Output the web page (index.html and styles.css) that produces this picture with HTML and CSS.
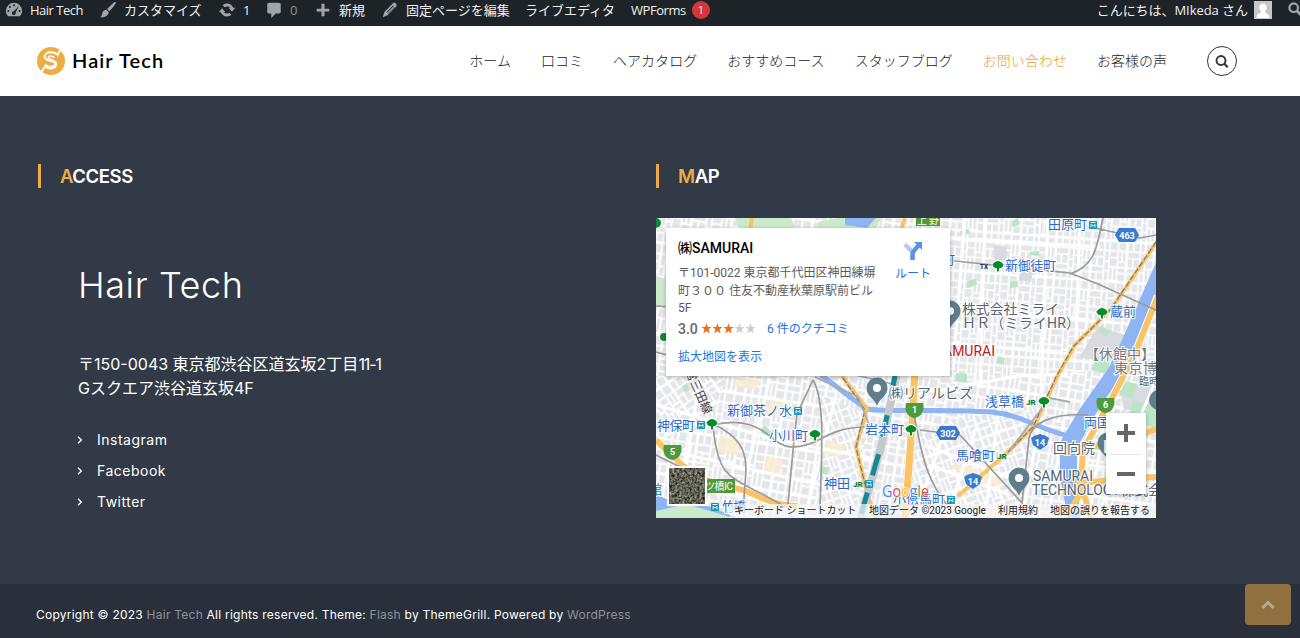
FILE: index.html
```html
<!DOCTYPE html>
<html lang="ja">
<head>
<meta charset="utf-8">
<title>Hair Tech</title>
<link rel="stylesheet" href="styles.css">
</head>
<body>
<div class="adminbar">
  <div class="ab-item ab-site"><svg class="ab-icon" width="18" height="18" viewBox="0 0 20 20"><path fill-rule="evenodd" d="M3.8 17h12.4c1.8-1.6 2.8-3.8 2.8-6a9 9 0 1 0-18 0c0 2.300 1 4.400 2.800 6zM10 3.500a1.100 1.100 0 1 1 0 2.200 1.100 1.100 0 0 1 0-2.200zM5.500 5.500a1.100 1.100 0 1 1 0 2.200 1.100 1.100 0 0 1 0-2.200zM3.700 9.900a1.100 1.100 0 1 1 0 2.200 1.100 1.100 0 0 1 0-2.200zM16.300 9.900a1.100 1.100 0 1 1 0 2.200 1.100 1.100 0 0 1 0-2.200zM15.500 5.500 11.800 12.800a2.100 2.100 0 1 1-2-1.400z"/></svg><span>Hair Tech</span></div>
  <div class="ab-item ab-custom"><svg class="ab-icon" width="18" height="18" viewBox="0 0 20 20"><path d="M18.300 1.200c1 .9-.2 3-6.700 10.200l-2.700-2.400C15.300 2.300 17.300.3 18.300 1.200zM8 9.800l2.800 2.500c-.2 3.600-4.200 7-9.600 5.500 2.500-.8 1.800-3.500 3-5.500C5 10.700 6.500 9.900 8 9.800z"/></svg><span>カスタマイズ</span></div>
  <div class="ab-item ab-update"><svg class="ab-icon" width="18" height="18" viewBox="0 0 20 20"><path d="M10.200 2.800c3 0 5.600 1.900 6.600 4.700h2.400l-3.700 4.500L11.800 7.500h1.800c-.8-.9-2-1.500-3.400-1.500-1.100 0-2.100.4-2.900 1L5.200 4.700c1.300-1.200 3.100-1.900 5-1.900zM9.800 17.200c-3 0-5.600-1.900-6.600-4.700H.8L4.500 8l3.700 4.500H6.400c.8.900 2 1.500 3.400 1.500 1.100 0 2.100-.4 2.900-1l2.100 2.300c-1.300 1.200-3.100 1.900-5 1.900z"/></svg><span>1</span></div>
  <div class="ab-item ab-comment"><svg class="ab-icon" width="18" height="18" viewBox="0 0 20 20"><path d="M4.500 2h11c1 0 2 .9 2 2v8c0 1-1 2-2 2H12l-5 5v-5H4.500c-1 0-2-1-2-2V4c0-1 1-2 2-2z"/></svg><span class="ab-dim">0</span></div>
  <div class="ab-item ab-new"><svg class="ab-icon" width="18" height="18" viewBox="0 0 20 20"><path d="M8.300 3h3.400v5.500H17v3.300h-5.300V17H8.300v-5.200H3V8.500h5.300z"/></svg><span>新規</span></div>
  <div class="ab-item ab-edit"><svg class="ab-icon" width="18" height="18" viewBox="0 0 20 20"><path fill-rule="evenodd" d="M13.200 2.400c1.100-1.100 2.400-.6 3.300.3s1.400 2.200.4 3.300L7.300 15.700 2 18l1.700-5.700zM13.400 5.100l-7.300 7.400.6.500L14 5.700zM14.900 6.600l-7.400 7.200.4.400 7.400-7.200z"/></svg><span>固定ページを編集</span></div>
  <div class="ab-item ab-live"><span>ライブエディタ</span></div>
  <div class="ab-item ab-forms"><span>WPForms</span><b class="ab-badge">1</b></div>
  <div class="ab-right">
    <span class="ab-hello">こんにちは、MIkeda さん</span>
    <svg class="avatar" width="18" height="18" viewBox="0 0 18 18"><path fill="#c5c7c9" d="M0 0h18v18H0z"/><path fill="#fff" d="M9 2.500a3.700 3.700 0 0 1 3.700 4c0 2-.7 3-1.500 3.700v1.500c2.500.7 4 1.800 4.300 5.300h-13c.3-3.500 1.800-4.600 4.300-5.300v-1.500C6 9.500 5.300 8.500 5.300 6.500A3.700 3.700 0 0 1 9 2.500z"/></svg>
    <svg class="ab-search" width="18" height="18" viewBox="0 0 18 18"><circle cx="6.700" cy="6.700" r="4.300" fill="none" stroke="#a0a5aa" stroke-width="2.200"/><path d="m10 10 6 6" stroke="#a0a5aa" stroke-width="3"/></svg>
  </div>
</div>
<header class="header">
  <a class="brand">
    <svg width="28" height="28" viewBox="0 0 28 28"><circle cx="14" cy="14" r="14" fill="#eead42"/><path d="M23 3.500 20.500 8c-1.500-2-4-2.700-6.800-2.700-3.500 0-6 1.600-6 4.300 0 6 10.600 3.300 10.600 7.300 0 3.400-6.700 3.700-9.500 1.300L4.500 25" fill="none" stroke="#fff" stroke-width="1.900"/><path d="M17.300 10.700c-2.500-2.300-6-2-6 .1 0 2.500 8 1.600 8 6.400 0 4.700-7.800 5.800-11.700 2.500" fill="none" stroke="#fff" stroke-width="1.700"/></svg>
    <span>Hair Tech</span>
  </a>
  <nav class="nav"><a>ホーム</a><a>口コミ</a><a>ヘアカタログ</a><a>おすすめコース</a><a>スタッフブログ</a><a class="active">お問い合わせ</a><a>お客様の声</a></nav>
  <div class="search"><svg width="14" height="14" viewBox="0 0 14 14" fill="none" stroke="#333"><circle cx="6" cy="6.500" r="4.500" stroke-width="1.900"/><path d="m9.300 9.800 3.400 3.400" stroke-width="2.300"/></svg></div>
</header>
<main class="main">
  <section class="col">
    <h3 class="heading"><span><i>A</i>CCESS</span></h3>
    <div class="access">
      <h1>Hair Tech</h1>
      <p class="address">〒<span class="zip">150-0043</span> 東京都渋谷区道玄坂2丁目<span class="tight">11-1</span><br>Gスクエア渋谷道玄坂4F</p>
      <ul class="links">
        <li><svg width="6" height="8" viewBox="0 0 6 8"><path d="m1 .8 3.300 3.200L1 7.200"/></svg><a>Instagram</a></li>
        <li><svg width="6" height="8" viewBox="0 0 6 8"><path d="m1 .8 3.300 3.200L1 7.200"/></svg><a>Facebook</a></li>
        <li><svg width="6" height="8" viewBox="0 0 6 8"><path d="m1 .8 3.300 3.200L1 7.200"/></svg><a>Twitter</a></li>
      </ul>
    </div>
  </section>
  <section class="col">
    <h3 class="heading"><span><i>M</i>AP</span></h3>
    <div class="map">
      <svg class="map-art" width="500" height="300" viewBox="656 218 500 300">
        <defs>
          <pattern id="blocksA" width="42" height="48" patternUnits="userSpaceOnUse" patternTransform="rotate(4) scale(.85)">
            <path fill="#fff" d="M0 0h42v48H0z"/><path fill="#e4e6ea" d="M1 1h5v9H1zM8 1h6v9H8zM16 1h4v9h-4zM22 1h8v9h-8zM32 1h8v9h-8zM1 12h13v6H1zM16 12h4v11h-4zM22 12h8v6h-8zM32 12h3v11h-3zM37 12h3v11h-3zM1 20h5v9H1zM8 20h6v9H8zM22 20h8v9h-8zM16 25h4v9h-4zM32 25h8v4h-8zM1 31h13v5H1zM22 31h3v14h-3zM27 31h3v14h-3zM32 31h8v5h-8zM1 38h5v8H1zM8 38h6v8H8zM16 36h4v10h-4zM32 38h8v8h-8z"/>
          </pattern>
          <pattern id="blocksB" href="#blocksA" patternTransform="rotate(-19) scale(.85)"/>
          <pattern id="blocksC" href="#blocksA" patternTransform="rotate(-34) scale(.9)"/>
          <pattern id="blocksD" href="#blocksA" patternTransform="rotate(9) scale(.95)"/>
          <filter id="ground" x="0" y="0" width="1" height="1" color-interpolation-filters="sRGB"><feTurbulence type="fractalNoise" baseFrequency=".4" numOctaves="3" seed="4"/><feColorMatrix values=".9 .3 0 0 -.22 .9 .3 0 0 -.22 .8 .3 0 0 -.22 0 0 0 0 1"/></filter>
          <path id="pin" d="M0 14C-2 7-10.500 4-10.500-4a10.500 10.500 0 0 1 21 0C10.500 4 2 7 0 14z"/>
          <path id="leaf" d="M-1 5.500v-3C-4 2-5.500 0-5.500-1.500-4-3.800-2-5 0-5s4 1.200 5.500 3.500C5.500 0 4 2 1 2.500v3z"/>
          <g id="metro"><rect x="-4" y="-4" width="8" height="8" rx="1" fill="#1595b5"/><path d="M-2 2.500V-.5l2 1.500 2-1.500v3M-2.500-2.500h5" fill="none" stroke="#fff" stroke-width=".9"/></g>
        </defs>
        <path fill="url(#blocksD)" d="M656 218h500v300H656z"/>
        <path fill="url(#blocksA)" d="M940 218h216v147l-216 20z"/>
        <path fill="url(#blocksB)" d="M918 430l130-30-38 118H905z"/>
        <path fill="url(#blocksC)" d="M656 376h70l-15 45-55 20z"/>
        <path fill="url(#blocksB)" d="M822 395l45 20-10 103h-40z"/>
        <g fill="#f8ecd2"><path d="m720 435 20 5-3 16-20-5zM770 400l20 3-4 15-20-4zM766 456l17 3-4 18-16-3zM828 440l18 6-5 12-18-5zM955 462l50 18-7 6-48-18zM735 377l25 4-4 9-22-4z" opacity=".85"/></g>
        <g fill="#d9dbe0"><path d="m994 245 13 2-1 14-12-1zM1020 270l13 2-2 10-12-2zM1098 326l36 12-15 24-40-4zM1120 390l36-10v30h-32z"/></g>
        <g fill="#bce5c5"><path d="m682 386 5-3 3 7-5 3zM760 430l5-5 7 8-5 4zM960 231l9-2 1 5-9 1zM1012 221l6-3 1 7-7 2zM967 281l9-2 1 6-10 3zM1030 252l9-1v5l-9-1zM1010 282l8-1v6l-8 1zM956 373l11 1v9l-11-2zM998 356l6 2v7l-7-2zM1102 325l8 8-4 4-8-7zM1120 380l17 4-4 14-16-4zM1133 400l23 8v20l-27-8zM1095 358l15 4-3 12-15-4zM822 466l7 2-2 7-6-2z"/></g>
        <path fill="#cceacb" d="m735 218 56 0 5 11h-57zM818 222l20-4h43l-5 11h-58zM656 276l12 4v30l-12-5z"/>
        <path fill="#8eb4f4" d="m845 218 31 0-9 10-22-3z"/>
        <g fill="none" stroke="#fff" stroke-width="3"><path d="M965 218l-12 152M985 218l-5 170M1048 218l-7 175M1080 218l-4 122M940 237l160 10M940 304l150 16M940 342l130 12M656 405l120 35 100 19M656 448l210 47M700 376l-22 142M770 378l-35 140M840 378l-35 140M925 445l90 35M930 465l80 30M945 430l-30 88M977 425l-30 93M1000 400l-15 118M1045 395l-23 123M918 394l100-18 50-2M1156 380l-60 138M1100 430l56 12M1086 465l70 8"/></g>
        <path d="m1158 258-36 82-14 29-29 41-19 32v36l8 40h12l-3-40v-30l21-38 33-48 26-66z" fill="#8eb4f4"/>
        <path d="m820 374 30 23 17 12c30 4 70-1 125 3 35 4 50 20 82 25" fill="none" stroke="#8eb4f4" stroke-width="5"/>
        <path d="m656 495 22 8 30 3 30 12h-82z" fill="#8eb4f4"/><path d="m656 511 30-7 48 14h-78z" fill="#cceacb"/>
        <g fill="none" stroke="#fff" stroke-width="8"><path d="m656 440 26 25c18 16 37 19 57 24 20 5 25 15 58 17"/><path d="m1158 296-24 60-22 42-29 52-2 34 10 34"/><path d="m915 370-3 54-7 96"/></g>
        <g fill="none" stroke="#fac465" stroke-width="6"><path d="m656 440 26 25c18 16 37 19 57 24 20 5 25 15 58 17"/><path d="m1158 296-24 60-22 42-29 52-2 34 10 34M1076 483l80-6M1076 448l40-3 40-16M1086 483l-20 35"/><path d="m915 370-3 54-7 96" stroke-width="7"/><path d="m842 376 25 33-11 38 12 50 8 21M1158 240l-46 68-37 37-17 30-23 50-25 25-52 46M752 218l-2 12M905 218l-4 12" stroke-width="4"/></g>
        <g fill="none" stroke="#777" stroke-width="1.200" stroke-dasharray="6 2"><path d="m1156 242-46 68-37 37-17 30-23 50-25 25M843 378l22 32-9 37 12 50"/></g>
        <g fill="none" stroke="#9b9b9b" stroke-width="1.700"><path d="m940 259 15 2 115 12 28 11 60 27M1103 218c-6 26-6 47-33 56M1095 228l45 10 16-3M713 425c50-12 58 21 77 22 29 1 35-20 76-20M813 380l-16 34-3 26-6 64M813 380c12 20 9 70 7 126M713 425c5 60 20 50 72 82M715 425c42 20 29 47 29 76M913 412c8 30 8 60 34 93M920 430l40 5 62 68 7-65c3-15 22-25 59-23M656 455l30 15M656 306l30 2M656 352l30 8"/><path d="m815 377 43 20 14 35M851 374l42 10" stroke="#aaa"/></g>
        <g fill="none"><path d="m897 374-16 73-21 74" stroke="#c6c9cc" stroke-width="8"/><path d="m895 376-14 70-21 72" stroke="#148899" stroke-width="5" stroke-dasharray="22 18"/><path d="m1010 450 40-52 20 4" stroke="#aaa" stroke-width="2"/></g>
        <g fill="#607d8b"><use href="#pin" x="877" y="392"/><use href="#pin" x="950" y="315"/><use href="#pin" x="1019" y="482"/><use href="#pin" x="1108" y="447"/><circle cx="1159" cy="400" r="10"/></g>
        <g fill="#fff"><circle cx="877" cy="388" r="4"/><circle cx="950" cy="311" r="4"/><circle cx="1019" cy="478" r="4"/></g>
        <g fill="#078c2d" stroke="#fff" stroke-width="2" paint-order="stroke"><use href="#leaf" x="998" y="266"/><use href="#leaf" x="1102" y="313"/><use href="#leaf" x="1044" y="402"/><use href="#leaf" x="911" y="430"/><use href="#leaf" x="815" y="435"/><use href="#leaf" x="712" y="424"/><circle cx="656" cy="223" r="5"/><circle cx="664" cy="337" r="4"/></g>
        <use href="#metro" x="1093" y="225"/><use href="#metro" x="798" y="411"/><use href="#metro" x="701" y="425"/><use href="#metro" x="869" y="484"/><use href="#metro" x="951" y="500"/><use href="#metro" x="715" y="507"/>
        <g class="shield"><path fill="#3a7bd0" d="M1119 228h16l4 7-4 7h-16l-4-7zM940 426h16l4 7-4 7h-16l-4-7zM1034 436l6-2 6 2 3 2-2 7-7 5-7-5-2-7zM967 475l6-2 6 2 3 2-2 7-7 5-7-5-2-7z"/><path fill="#4f9a3c" d="M906 403h17c2 8-2 14-8.500 15-7-1-10.500-7-8.500-15zM1097 398h17c2 8-2 14-8.500 15-7-1-10.500-7-8.500-15zM664 445h17c2 8-2 14-8.500 15-7-1-10.500-7-8.500-15zM916 218h24v8h-24zM706 479h29v14h-29z"/>
        <g fill="#fff" text-anchor="middle"><text x="1127" y="238.500">463</text><text x="948" y="436.500">302</text><text x="1040" y="446">14</text><text x="973" y="485">14</text><text x="914.500" y="413">1</text><text x="1105.500" y="408">6</text><text x="672.500" y="455">5</text></g></g>
        <g class="sign"><text x="917" y="224" textLength="22">上野</text><text x="705" y="490" textLength="28">ツ橋IC</text></g>
        <g class="station"><text x="1048" y="229" textLength="39">田原町</text><text x="942" y="264">町</text><text x="1005" y="270" textLength="51">新御徒町</text><text x="1110" y="316" textLength="26">蔵前</text><text x="985" y="406" textLength="39">浅草橋</text><text x="865" y="434" textLength="39">岩本町</text><text x="956" y="460" textLength="39">馬喰町</text><text x="727" y="415" textLength="65">新御茶ノ水</text><text x="769" y="440" textLength="39">小川町</text><text x="657" y="430" textLength="38">神保町</text><text x="824" y="488" textLength="26">神田</text><text x="893" y="504" textLength="52">小伝馬町</text><text x="722" y="511" textLength="24">竹橋</text><text x="1084" y="427" textLength="26">両国</text><text x="649" y="494" fill="#147b93">館</text></g>
        <g class="rail"><text x="1026" y="405">JR</text><text x="997" y="459">JR</text><text x="853" y="487">JR</text><text x="980" y="269" fill="#263c70" textLength="8" lengthAdjust="spacingAndGlyphs">TX</text></g>
        <g class="place"><text x="962" y="314" textLength="97">株式会社ミライ</text><text x="962" y="328" textLength="118">ＨＲ（ミライHR）</text><text x="889" y="398" textLength="84">㈱リアルビズ</text><text x="1033" y="481" textLength="60">SAMURAI</text><text x="1032" y="495" textLength="130">TECHNOLOGY株式会</text><text x="1053" y="453" textLength="42">回向院</text><text x="1085" y="359" textLength="70" class="grey">【休館中】</text><text x="1114" y="373" textLength="43" class="grey">東京博</text><text x="1139" y="385" class="tiny">臨時</text><text x="1104" y="452" fill="#fff">F</text></g>
        <text class="samurai" x="943" y="356" textLength="52">AMURAI</text>
        <text class="line-label" transform="translate(685 371) rotate(66)">営三田線</text>
        <text class="google" x="882" y="497" textLength="47" lengthAdjust="spacingAndGlyphs"><tspan fill="#4285f4">G</tspan><tspan fill="#ea4335">o</tspan><tspan fill="#fbbc05">o</tspan><tspan fill="#4285f4">g</tspan><tspan fill="#34a853">l</tspan><tspan fill="#ea4335">e</tspan></text>
        <path d="M667 466h40v40h-40z" fill="#fff"/><path d="M669 468h36v36h-36z" filter="url(#ground)"/>
      </svg>
      <div class="card">
        <div class="card-text">
          <h4>㈱SAMURAI</h4>
          <p>〒101-0022 東京都千代田区神田練塀<br>町３００ 住友不動産秋葉原駅前ビル<br>5F</p>
          <div class="rating"><b>3.0</b><svg width="55" height="11" viewBox="0 0 55 11"><defs><path id="star" d="m5.500.3 1.300 3.600h3.800L7.600 6.300l1.100 4.100-3.200-2.300-3.200 2.300 1.100-4.100L.4 3.900h3.800z"/></defs><g fill="#e7711b"><use href="#star"/><use href="#star" x="11"/><use href="#star" x="22"/></g><g fill="#ccc"><use href="#star" x="33"/><use href="#star" x="44"/></g></svg><a>6 件のクチコミ</a></div>
          <a class="bigmap">拡大地図を表示</a>
        </div>
        <div class="route"><svg width="20" height="20" viewBox="0 0 20 20"><path d="m2 3.500 8 8" stroke="#aecbfa" stroke-width="4.500"/><path d="M9.500 19v-5.500c0-3 2.300-5 6-9" fill="none" stroke="#5a94e0" stroke-width="4.500"/><path d="M11 1h8v8z" fill="#5a94e0"/></svg><a>ルート</a></div>
      </div>
      <div class="zoom"><span></span><span class="minus"></span></div>
      <div class="credits"><span class="c-key">キーボード ショートカット</span><span class="c-data">地図データ ©2023 Google</span><span class="c-term">利用規約</span><span>地図の誤りを報告する</span></div>
    </div>
  </section>
</main>
<footer class="footer"><p>Copyright © 2023 <a>Hair Tech</a> All rights reserved. Theme: <a>Flash</a> by ThemeGrill. Powered by <a>WordPress</a></p>
  <div class="totop"><svg width="14" height="10" viewBox="0 0 14 10"><path d="m1.500 8 5.500-5.500L12.500 8" fill="none" stroke="#b5aa98" stroke-width="3"/></svg></div>
</footer>
</body>
</html>
```
FILE: styles.css
```css
* { box-sizing: border-box; }
body { margin: 0; width: 1300px; height: 638px; overflow: hidden; background: #313a46; font-family: Inter, "Noto Sans CJK JP", sans-serif; color: #fff; }
h1, h3, h4, p, ul { margin: 0; padding: 0; }

.adminbar { height: 26px; background: #1d2327; display: flex; padding: 0 0 6px 5px; overflow: hidden; font: 13px/20px "Open Sans", "Noto Sans CJK JP", sans-serif; color: #f0f0f1; white-space: nowrap; }
.ab-item { display: flex; align-items: center; flex: none; height: 20px; }
.ab-icon { fill: #a0a5aa; margin-right: 7px; flex: none; }
.ab-site { width: 94px; letter-spacing: -.5px; }
.ab-custom { width: 119px; }
.ab-update { width: 47px; }
.ab-comment { width: 49px; }
.ab-new { width: 67px; }
.ab-edit { width: 144px; }
.ab-live { width: 106px; }
.ab-forms { letter-spacing: -.45px; }
.ab-dim { color: #8c8f94; }
.ab-badge { width: 18px; height: 18px; margin-left: 6px; border-radius: 50%; background: #d63638; font: 11px/18px "Open Sans", sans-serif; text-align: center; }
.ab-right { margin-left: auto; display: flex; align-items: center; height: 20px; margin-right: -5px; }
.avatar { margin: 0 15px 0 6px; }
.ab-hello { letter-spacing: -.05px; }

.header { height: 70px; background: #fff; display: flex; align-items: center; padding: 0 63px 0 37px; }
.brand { display: flex; align-items: center; gap: 7px; color: #000; font: 600 20px/28px Lato, sans-serif; letter-spacing: 1.1px; }
.brand span { margin-top: -3px; }
.nav { margin: -2px 0 0 auto; display: flex; gap: 30px; color: #222; font: 300 14px/20px "Noto Sans CJK JP", sans-serif; }
.nav a { letter-spacing: .02px; }
.nav .active { color: #e9a02d; }
.search { width: 30px; height: 30px; margin-left: 40px; border: 1px solid #333; border-radius: 50%; display: grid; place-items: center; }

.main { height: 488px; display: grid; grid-template-columns: 618px 500px; padding: 68px 0 0 38px; }
.heading { height: 24px; border-left: 3px solid #eead42; padding-left: 19px; font-size: 18.5px; font-weight: 600; line-height: 24px; letter-spacing: -.4px; }
.heading i { font-style: normal; color: #eead42; }
.access { padding: 73px 0 0 40px; }
.access h1 { font-size: 36px; font-weight: 350; line-height: 48px; letter-spacing: .6px; }
.address { margin-top: 43px; font-size: 16px; line-height: 24px; white-space: nowrap; }
.tight { letter-spacing: -1.1px; }
.links { list-style: none; margin-top: 24px; font-size: 14px; line-height: 31px; letter-spacing: .5px; }
.links li { display: flex; align-items: center; gap: 14px; height: 31px; margin-left: -1px; }
.links path { fill: none; stroke: #fff; stroke-width: 1.4; }

.map { position: relative; width: 500px; height: 300px; margin-top: 30px; overflow: hidden; color: #333; }
.map-art { display: block; font-family: Roboto, "Noto Sans CJK JP", sans-serif; }
.shield text { font-size: 9px; font-weight: 700; }
.sign { fill: #fff; font-size: 10px; }
.station { fill: #2868c9; font-size: 13px; }
.station text, .place text, .samurai { paint-order: stroke; stroke: #fff; stroke-width: 2px; }
.rail { fill: #138540; font-size: 8px; font-weight: 900; }
.place { fill: #546571; font-size: 14px; }
.place .grey { fill: #737980; }
.place .tiny { font-size: 10px; }
.samurai { fill: #b9191d; font-size: 14px; }
.line-label { fill: #444; font-size: 12px; }
.google { font: 500 16px "Open Sans", sans-serif; paint-order: stroke; stroke: #fff; stroke-width: 1.5px; }
.card { position: absolute; left: 10px; top: 10px; width: 284px; height: 148px; background: #fff; box-shadow: 0 1px 4px rgba(0,0,0,.3); padding: 11px 14px 0 12px; display: flex; justify-content: space-between; font-family: Roboto, "Noto Sans CJK JP", sans-serif; white-space: nowrap; }
.card h4 { font-size: 14px; font-weight: 500; line-height: 18px; color: #000; }
.card p { margin-top: 8px; font-size: 12px; line-height: 17.5px; color: #5b5b5b; }
.card a { color: #1a73e8; font-size: 12px; line-height: 16px; }
.rating { display: flex; align-items: center; height: 20px; margin-top: 1px; }
.rating b { font-size: 14px; font-weight: 500; color: #666; width: 23px; }
.rating a { margin-left: 11px; }
.bigmap { display: block; margin-top: 10px; }
.route { display: flex; flex-direction: column; align-items: center; width: 46px; padding-top: 2px; gap: 5px; }
.zoom { position: absolute; right: 10px; top: 195px; width: 40px; height: 81px; background: #fff; box-shadow: 0 1px 4px rgba(0,0,0,.3); display: grid; grid-template-rows: 1fr 1fr; }
.zoom span { background: linear-gradient(#666, #666) center / 18px 4px no-repeat, linear-gradient(#666, #666) center / 4px 18px no-repeat; }
.zoom .minus { background: linear-gradient(#666, #666) center / 18px 4px no-repeat; border-top: 1px solid #e6e6e6; margin: 0 5px; }
.credits { position: absolute; left: 74px; right: 0; bottom: 0; height: 14px; display: flex; padding: 0 6px 0 4px; background: rgba(245,245,245,.72); color: #222; font: 10px/14px Roboto, "Noto Sans CJK JP", sans-serif; white-space: nowrap; }
.c-key { width: 135px; }
.c-data { width: 129px; }
.c-term { width: 52px; }

.footer { height: 54px; background: #29303c; display: flex; justify-content: space-between; padding: 0 9px 0 36px; font-size: 12px; letter-spacing: .24px; }
.footer p { line-height: 62px; white-space: nowrap; }
.footer a { color: #8e9298; }
.totop { width: 46px; height: 41px; background: #8f703e; border-radius: 4px; display: grid; place-items: center; }
```
